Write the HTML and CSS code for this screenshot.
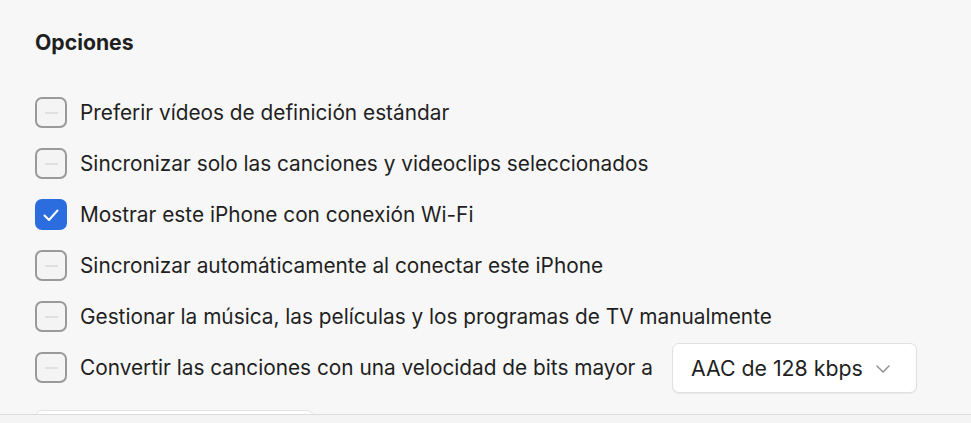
FILE: index.html
```html
<!DOCTYPE html>
<html lang="es">
<head>
<meta charset="utf-8">
<title>Opciones</title>
<link rel="stylesheet" href="styles.css">
</head>
<body>
<div class="window">
  <div class="scroll">
    <h2 class="title">Opciones</h2>
    <ul class="options">
      <li class="option"><span class="check"></span><span class="label">Preferir vídeos de definición estándar</span></li>
      <li class="option"><span class="check"></span><span class="label">Sincronizar solo las canciones y videoclips seleccionados</span></li>
      <li class="option"><span class="check on"><svg viewBox="0 0 32 32" width="32" height="32"><path d="M9.5 16.5 L14 21 L22.5 11.5" fill="none" stroke="#fff" stroke-width="2" stroke-linecap="round" stroke-linejoin="round"/></svg></span><span class="label">Mostrar este iPhone con conexión Wi-Fi</span></li>
      <li class="option"><span class="check"></span><span class="label">Sincronizar automáticamente al conectar este iPhone</span></li>
      <li class="option"><span class="check"></span><span class="label">Gestionar la música, las películas y los programas de TV manualmente</span></li>
      <li class="option"><span class="check"></span><span class="label">Convertir las canciones con una velocidad de bits mayor a</span>
        <span class="select">AAC de 128 kbps<svg class="chev" viewBox="0 0 14 8" width="14" height="8"><path d="M1 1 L7 7 L13 1" fill="none" stroke="#8a8a8a" stroke-width="1.4" stroke-linecap="round" stroke-linejoin="round"/></svg></span>
      </li>
    </ul>
    <div class="button-peek"></div>
  </div>
  <div class="footer"></div>
</div>
</body>
</html>
```
FILE: styles.css
```css
* { box-sizing: border-box; }
html, body { margin: 0; padding: 0; }
body {
  width: 971px;
  height: 423px;
  overflow: hidden;
  background: #f7f7f7;
  font-family: Inter, "Noto Sans", "Liberation Sans", sans-serif;
  color: #1f1f1f;
}
.window { display: flex; flex-direction: column; height: 423px; }
.scroll {
  height: 415px;
  overflow: hidden;
  border-bottom: 1px solid #dcdcdc;
  padding: 28px 0 0 35px;
  display: flex;
  flex-direction: column;
}
.title {
  margin: 0;
  font-size: 21.2px;
  font-weight: 700;
  line-height: 28px;
  color: #1f1f1f;
}
.options {
  list-style: none;
  margin: 41px 0 0 0;
  padding: 0;
  display: flex;
  flex-direction: column;
  gap: 20px;
}
.option {
  display: flex;
  align-items: center;
  height: 31px;
  font-size: 20.8px;
}
.check {
  width: 32px;
  height: 31px;
  border: 2px solid #9a9a9a;
  border-radius: 7px;
  background: #f4f4f4;
  margin-right: 13px;
  position: relative;
  display: flex;
  align-items: center;
  justify-content: center;
  flex-shrink: 0;
}
.check::after {
  content: "";
  width: 13px;
  height: 2px;
  background: #e0e0e0;
}
.check.on {
  background: #2b6cdf;
  border-color: #2b6cdf;
}
.check.on::after { display: none; }
.check.on svg { position: absolute; left: -2px; top: -2px; }
.label { white-space: nowrap; }
.select {
  margin-left: 19px;
  width: 245px;
  height: 50px;
  background: #fff;
  border: 1px solid #e0e0e0;
  border-radius: 7px;
  box-shadow: 0 1px 1px rgba(0,0,0,0.06);
  display: flex;
  align-items: center;
  padding: 0 26px 0 18px;
  justify-content: space-between;
  font-size: 21.3px;
}
.chev { margin-top: 2px; }
.button-peek {
  margin-top: 27px;
  width: 279px;
  height: 30px;
  flex-shrink: 0;
  background: #fff;
  border: 1px solid #e4e4e4;
  border-radius: 7px;
}
.footer { flex: 1; background: #f4f4f4; }
```
